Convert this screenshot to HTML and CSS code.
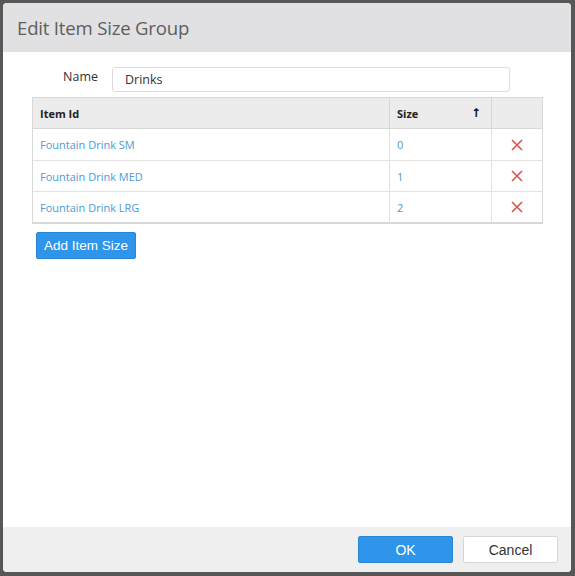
FILE: index.html
```html
<!DOCTYPE html>
<html>
<head>
<meta charset="utf-8">
<link rel="stylesheet" href="styles.css">
</head>
<body>
<div class="dialog">
  <div class="header">Edit Item Size Group</div>
  <div class="content">
    <div class="name-row">
      <label class="name-label">Name</label>
      <div class="name-input">Drinks</div>
    </div>
    <div class="grid">
      <div class="row head">
        <div class="cell c1">Item Id</div>
        <div class="cell c2"><span>Size</span><span class="arrow">&#x2191;</span></div>
        <div class="cell c3"></div>
      </div>
      <div class="row">
        <div class="cell c1 link">Fountain Drink SM</div>
        <div class="cell c2 link">0</div>
        <div class="cell c3"><svg class="x" viewBox="0 0 12 12" width="12" height="12"><path d="M1 1L11 11M11 1L1 11" stroke="#d9534f" stroke-width="1.6" fill="none"/></svg></div>
      </div>
      <div class="row mid">
        <div class="cell c1 link">Fountain Drink MED</div>
        <div class="cell c2 link">1</div>
        <div class="cell c3"><svg class="x" viewBox="0 0 12 12" width="12" height="12"><path d="M1 1L11 11M11 1L1 11" stroke="#d9534f" stroke-width="1.6" fill="none"/></svg></div>
      </div>
      <div class="row last">
        <div class="cell c1 link">Fountain Drink LRG</div>
        <div class="cell c2 link">2</div>
        <div class="cell c3"><svg class="x" viewBox="0 0 12 12" width="12" height="12"><path d="M1 1L11 11M11 1L1 11" stroke="#d9534f" stroke-width="1.6" fill="none"/></svg></div>
      </div>
    </div>
    <button class="btn primary add">Add Item Size</button>
  </div>
  <div class="footer">
    <button class="btn primary ok">OK</button>
    <button class="btn cancel">Cancel</button>
  </div>
</div>
</body>
</html>
```
FILE: styles.css
```css
html, body {
  margin: 0;
  padding: 0;
  background: #575757;
  height: 576px;
  overflow: hidden;
}
.dialog {
  margin: 3px 4px 4px 3px;
  width: 568px;
  height: 569px;
  background: #ffffff;
  border-radius: 4px;
  overflow: hidden;
  display: flex;
  flex-direction: column;
  font-family: "Open Sans", "Noto Sans", sans-serif;
}
.header {
  height: 49px;
  flex: none;
  background: #e1e1e3;
  color: #5e5e5e;
  font-size: 18.6px;
  line-height: 49px;
  padding-left: 14px;
  letter-spacing: -0.2px;
}
.content {
  flex: 1;
  padding: 14px 29px 0 29px;
}
.name-row {
  display: flex;
  align-items: center;
  height: 26px;
}
.name-label {
  width: 80px;
  text-align: right;
  padding-right: 14px;
  box-sizing: border-box;
  font-size: 12.5px;
  color: #333;
  margin-top: -6px;
}
.name-input {
  width: 398px;
  height: 25px;
  box-sizing: border-box;
  border: 1px solid #dcdcdc;
  border-radius: 3px;
  padding-left: 12px;
  font-size: 12.5px;
  color: #333;
  line-height: 24px;
}
.grid {
  margin-top: 5px;
  width: 511px;
  border: 1px solid #d8d8d8;
  border-bottom: 2px solid #d8d8d8;
  box-sizing: border-box;
}
.row {
  display: flex;
  height: 32px;
  border-bottom: 1px solid #e2e2e2;
  box-sizing: border-box;
}
.row.mid {
  height: 31px;
}
.row.last {
  border-bottom: none;
  height: 30px;
}
.row.head {
  height: 31px;
  background: #ececec;
  font-weight: bold;
  color: #222;
  border-bottom: 1px solid #d8d8d8;
}
.cell {
  display: flex;
  align-items: center;
  font-size: 11px;
  box-sizing: border-box;
  padding-left: 7px;
}
.c1 {
  width: 357px;
  border-right: 1px solid #e2e2e2;
}
.c2 {
  width: 102px;
  border-right: 1px solid #e2e2e2;
  justify-content: space-between;
  padding-right: 10px;
}
.c3 {
  flex: 1;
  justify-content: center;
  padding-left: 0;
}
.head .c1, .head .c2 {
  border-right-color: #d8d8d8;
}
.arrow {
  font-weight: bold;
  font-family: "DejaVu Sans", sans-serif;
  font-size: 12px;
  color: #111;
}
.link {
  color: #4d9ad6;
}
.btn {
  font-family: "Liberation Sans", Arial, sans-serif;
  font-size: 13.5px;
  box-sizing: border-box;
  border-radius: 2px;
  cursor: pointer;
}
.primary {
  background: #2e95ea;
  border: 1px solid #2a86d2;
  color: #ffffff;
}
.add {
  margin-top: 8px;
  margin-left: 4px;
  width: 100px;
  height: 27px;
  padding: 0;
}
.footer {
  height: 45px;
  flex: none;
  background: #efefef;
  display: flex;
  justify-content: flex-end;
  align-items: center;
  gap: 10px;
  padding-right: 13px;
  box-sizing: border-box;
}
.ok, .cancel {
  width: 95px;
  height: 27px;
  padding: 0;
  font-size: 14px;
}
.cancel {
  background: #ffffff;
  border: 1px solid #d6d6d6;
  color: #333;
}
```
